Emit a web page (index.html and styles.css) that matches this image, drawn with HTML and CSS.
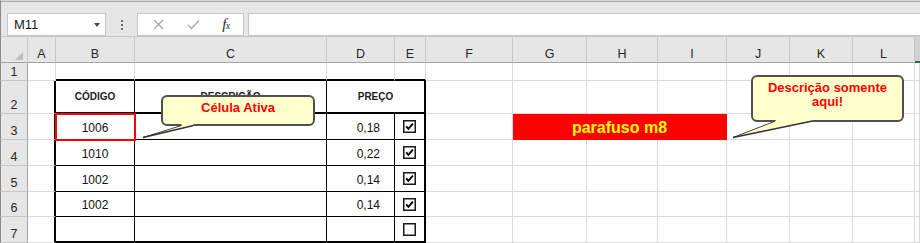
FILE: index.html
```html
<!DOCTYPE html>
<html lang="pt">
<head>
<meta charset="utf-8">
<title>Planilha</title>
<link rel="stylesheet" href="styles.css">
</head>
<body>
<div class="page">
  <div class="toolbar">
    <div class="namebox"><span>M11</span><span class="arrow"></span></div>
    <div class="dots"><i></i><i></i><i></i></div>
    <div class="fxbox">
      <svg width="11" height="11" viewBox="0 0 11 11"><path d="M1 1 L10 10 M10 1 L1 10" stroke="#a6a6a6" stroke-width="1.3" fill="none"/></svg>
      <svg width="13" height="11" viewBox="0 0 13 11"><path d="M1 6 L4.5 9.5 L12 1.5" stroke="#a6a6a6" stroke-width="1.4" fill="none"/></svg>
      <span class="fx">f<small>x</small></span>
    </div>
    <div class="formula"></div>
  </div>

  <div class="sheet">
    <!-- header row -->
    <div class="h corner"><span class="tri"></span></div>
    <div class="h">A</div><div class="h">B</div><div class="h">C</div><div class="h">D</div><div class="h">E</div>
    <div class="h">F</div><div class="h">G</div><div class="h">H</div><div class="h">I</div><div class="h">J</div>
    <div class="h">K</div><div class="h">L</div><div class="h hsel"></div>

    <!-- row 1 -->
    <div class="rh">1</div>
    <div class="c"></div>
    <div class="c bt2"></div><div class="c bt2"></div><div class="c bt2"></div><div class="c bt2"></div>
    <div class="c"></div><div class="c"></div><div class="c"></div><div class="c"></div><div class="c"></div><div class="c"></div><div class="c"></div><div class="c"></div>

    <!-- row 2 -->
    <div class="rh">2</div>
    <div class="c bl2"></div>
    <div class="c t hd">CÓDIGO</div>
    <div class="c t hd">DESCRIÇÃO</div>
    <div class="c t hd er span2">PREÇO</div>
    <div class="c"></div><div class="c"></div><div class="c"></div><div class="c"></div><div class="c"></div><div class="c"></div><div class="c"></div><div class="c"></div>

    <!-- row 3 -->
    <div class="rh">3</div>
    <div class="c bl2"></div>
    <div class="c t d active">1006</div>
    <div class="c t"></div>
    <div class="c t d num">0,18</div>
    <div class="c t er"><svg class="cb" width="13" height="13" viewBox="0 0 13 13"><rect x="0.75" y="0.75" width="11.5" height="11.5" fill="#fff" stroke="#1a1a1a" stroke-width="1.5"/><path d="M3.2 6.3 L5.4 8.8 L9.9 3.6" fill="none" stroke="#000" stroke-width="2"/></svg></div>
    <div class="c"></div>
    <div class="c fill span3">parafuso m8</div>
    <div class="c"></div><div class="c"></div><div class="c"></div><div class="c"></div>

    <!-- row 4 -->
    <div class="rh">4</div>
    <div class="c bl2"></div>
    <div class="c t d">1010</div>
    <div class="c t"></div>
    <div class="c t d num">0,22</div>
    <div class="c t er"><svg class="cb" width="13" height="13" viewBox="0 0 13 13"><rect x="0.75" y="0.75" width="11.5" height="11.5" fill="#fff" stroke="#1a1a1a" stroke-width="1.5"/><path d="M3.2 6.3 L5.4 8.8 L9.9 3.6" fill="none" stroke="#000" stroke-width="2"/></svg></div>
    <div class="c"></div><div class="c"></div><div class="c"></div><div class="c"></div><div class="c"></div><div class="c"></div><div class="c"></div><div class="c"></div>

    <!-- row 5 -->
    <div class="rh">5</div>
    <div class="c bl2"></div>
    <div class="c t d">1002</div>
    <div class="c t"></div>
    <div class="c t d num">0,14</div>
    <div class="c t er"><svg class="cb" width="13" height="13" viewBox="0 0 13 13"><rect x="0.75" y="0.75" width="11.5" height="11.5" fill="#fff" stroke="#1a1a1a" stroke-width="1.5"/><path d="M3.2 6.3 L5.4 8.8 L9.9 3.6" fill="none" stroke="#000" stroke-width="2"/></svg></div>
    <div class="c"></div><div class="c"></div><div class="c"></div><div class="c"></div><div class="c"></div><div class="c"></div><div class="c"></div><div class="c"></div>

    <!-- row 6 -->
    <div class="rh">6</div>
    <div class="c bl2"></div>
    <div class="c t d">1002</div>
    <div class="c t"></div>
    <div class="c t d num">0,14</div>
    <div class="c t er"><svg class="cb" width="13" height="13" viewBox="0 0 13 13"><rect x="0.75" y="0.75" width="11.5" height="11.5" fill="#fff" stroke="#1a1a1a" stroke-width="1.5"/><path d="M3.2 6.3 L5.4 8.8 L9.9 3.6" fill="none" stroke="#000" stroke-width="2"/></svg></div>
    <div class="c"></div><div class="c"></div><div class="c"></div><div class="c"></div><div class="c"></div><div class="c"></div><div class="c"></div><div class="c"></div>

    <!-- row 7 -->
    <div class="rh">7</div>
    <div class="c bl2"></div>
    <div class="c t last"></div>
    <div class="c t last"></div>
    <div class="c t last"></div>
    <div class="c t er last"><svg class="cb" width="13" height="13" viewBox="0 0 13 13"><rect x="0.75" y="0.75" width="11.5" height="11.5" fill="#fff" stroke="#1a1a1a" stroke-width="1.5"/></svg></div>
    <div class="c"></div><div class="c"></div><div class="c"></div><div class="c"></div><div class="c"></div><div class="c"></div><div class="c"></div><div class="c"></div>
  </div>

  <div class="callout callout-1">Célula Ativa</div>
  <div class="callout callout-2">Descrição somente<br>aqui!</div>
  <svg class="tails" width="920" height="243" viewBox="0 0 920 243">
    <polygon points="181.5,121 193.5,121 193.5,125.5 143,137.5 181.5,125.5" fill="#ffffcc"/>
    <path d="M181.5 125.5 L143 137.5" stroke="#444" stroke-width="1" fill="none"/>
    <path d="M193.5 125.5 L143 137.5" stroke="#333" stroke-width="1.6" fill="none"/>
    <polygon points="775.5,117 812.5,117 812.5,121 733,137.5 775.5,121" fill="#ffffcc"/>
    <path d="M775.5 121 L733 137.5" stroke="#444" stroke-width="1" fill="none"/>
    <path d="M812.5 121 L733 137.5" stroke="#333" stroke-width="1.6" fill="none"/>
  </svg>
</div>
</body>
</html>
```

FILE: styles.css
```css
* { box-sizing: border-box; }

html, body {
  margin: 0;
  padding: 0;
  background: #fff;
}

.page {
  position: relative;
  width: 920px;
  height: 243px;
  overflow: hidden;
  font-family: "Liberation Sans", Arial, sans-serif;
  color: #000;
}

/* ---------- formula bar ---------- */
.toolbar {
  height: 36px;
  background: #e6e6e6;
  border-top: 1px solid #d6d6d6;
  box-shadow: inset 0 1px 0 #a9a9a9;
  border-left: 1px solid #8a8a8a;
  display: flex;
  align-items: flex-start;
  padding: 12px 0 0 6px;
}

.namebox {
  width: 99px;
  height: 23px;
  background: #fff;
  border: 1px solid #c6c6c6;
  display: flex;
  align-items: center;
  padding: 0 5px 0 6px;
  font-size: 13px;
  color: #1a1a1a;
}

.namebox .arrow {
  margin-left: auto;
  width: 0;
  height: 0;
  border-left: 3.5px solid transparent;
  border-right: 3.5px solid transparent;
  border-top: 4px solid #4a4a4a;
}

.dots {
  width: 31px;
  height: 23px;
  display: flex;
  flex-direction: column;
  align-items: center;
  justify-content: center;
  gap: 2px;
}

.dots i {
  display: block;
  width: 2px;
  height: 2px;
  background: #6e6e6e;
}

.fxbox {
  width: 107px;
  height: 23px;
  background: #fff;
  border: 1px solid #c6c6c6;
  display: flex;
  align-items: center;
  justify-content: space-around;
  padding: 0 2px 0 4px;
}

.fx {
  font-family: "Liberation Serif", "Times New Roman", serif;
  font-style: italic;
  font-size: 15px;
  line-height: 15px;
  color: #2a2a2a;
  letter-spacing: -0.5px;
}

.fx small {
  font-size: 10px;
}

.formula {
  flex: 1;
  height: 23px;
  margin-left: 4px;
  background: #fff;
  border: 1px solid #c6c6c6;
  border-right: none;
}

/* ---------- grid ---------- */
.sheet {
  display: grid;
  grid-template-columns: 28px 28px 79px 192px 68px 31px 87px 74px 71px 69px 63px 63px 62px 5px;
  grid-template-rows: 27px 18px 33px 26px 26px 26px 25px 26px;
  font-size: 12px;
}

.h {
  background: #e6e6e6;
  border-top: 1px solid #c6c6c6;
  border-right: 1px solid #c8c8c8;
  border-bottom: 1px solid #a5a5a5;
  display: flex;
  align-items: flex-end;
  justify-content: center;
  padding-bottom: 1px;
  font-size: 12.5px;
  line-height: 14px;
  color: #262626;
}

.h.corner {
  position: relative;
  border-left: 1px solid #8a8a8a;
}

.h.corner .tri {
  position: absolute;
  right: 4px;
  bottom: 2px;
  width: 0;
  height: 0;
  border-left: 8px solid transparent;
  border-bottom: 8px solid #bdbdbd;
}

.h.hsel {
  background: #d2d2d2;
  border-right: none;
  border-bottom: 2px solid #217346;
}

.rh {
  background: #e6e6e6;
  border-left: 1px solid #8a8a8a;
  border-right: 1px solid #a5a5a5;
  border-bottom: 1px solid #c6c6c6;
  display: flex;
  align-items: flex-end;
  justify-content: center;
  font-size: 12.5px;
  line-height: 14px;
  padding-bottom: 1px;
  color: #262626;
}

.c {
  border-right: 1px solid #dadada;
  border-bottom: 1px solid #dadada;
  display: flex;
  align-items: center;
  justify-content: center;
  line-height: 14px;
}

/* data table borders */
.bt2 { border-bottom: 2px solid #000; }
.bl2 { border-right: 2px solid #000; }
.t {
  border-right: 1px solid #000;
  border-bottom: 1px solid #000;
}
.er { border-right: 2px solid #000; }
.last { border-bottom: 2px solid #000; }

.hd {
  border-bottom: 2px solid #000;
  font-weight: bold;
  font-size: 10px;
  color: #1c1c28;
}

.span2 { grid-column: span 2; }
.span3 { grid-column: span 3; }

.d {
  padding-top: 2px;
  color: #111;
}

.num {
  justify-content: flex-end;
  padding-right: 14px;
}

.active {
  position: relative;
  z-index: 1;
  outline: 2px solid #ff0000;
  outline-offset: -1px;
}

.fill {
  background: #ff0000;
  border-color: #ff0000;
  color: #ffff00;
  font-weight: bold;
  font-size: 16px;
  padding-top: 2px;
}

.cb { display: block; }

/* ---------- callouts ---------- */
.callout {
  position: absolute;
  background: #ffffcc;
  border: 2px solid #505050;
  border-radius: 6px;
  color: #ff0000;
  font-weight: bold;
  font-size: 13px;
  line-height: 14px;
  text-align: center;
  padding-top: 4px;
}

.callout-1 {
  left: 161px;
  top: 95px;
  width: 154px;
  height: 31px;
}

.callout-2 {
  left: 751px;
  top: 75px;
  width: 153px;
  height: 47px;
}

.tails {
  position: absolute;
  left: 0;
  top: 0;
  pointer-events: none;
}
```
